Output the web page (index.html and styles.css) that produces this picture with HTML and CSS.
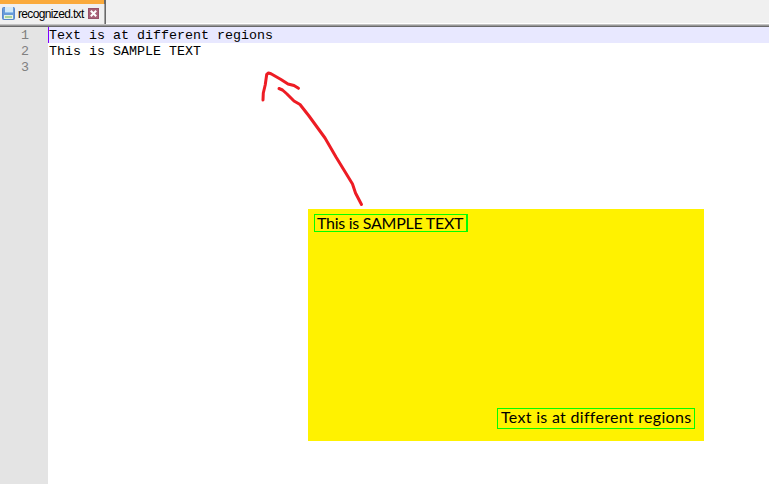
FILE: index.html
```html
<!DOCTYPE html>
<html lang="en">
<head>
<meta charset="utf-8">
<title>recognized.txt</title>
<link rel="stylesheet" href="styles.css">
</head>
<body>
<div class="window">
  <header class="tabs">
    <div class="tab">
      <svg class="save" width="13" height="13" viewBox="0 0 13 13">
        <rect x=".5" y=".5" width="12" height="12" rx="1" fill="#699bd9" stroke="#5788cb"/>
        <rect x="3" y="0" width="8" height="6" fill="#d3e9f8"/>
        <rect x="3" y="5" width="8" height="1" fill="#8fc1ec"/>
        <rect x="2" y="8" width="9" height="4" fill="#e8f2e2"/>
        <rect x="3" y="9" width="7" height="2" fill="#a9d59b"/>
      </svg>
      <span class="name">recognized.txt</span>
      <svg class="close" width="11" height="11" viewBox="0 0 11 11">
        <rect x=".5" y=".5" width="10" height="10" fill="#a76076" stroke="#985069"/>
        <path d="M2.8 2.8 8.2 8.2M8.2 2.8 2.8 8.2" stroke="#fff" stroke-width="2"/>
      </svg>
    </div>
  </header>
  <main class="editor">
    <div class="gutter"><div>1</div><div>2</div><div>3</div></div>
    <div class="code">
      <div class="line current"><span>Text is at different regions</span></div>
      <div class="line"><span>This is SAMPLE TEXT</span></div>
      <div class="line"></div>
    </div>
  </main>
  <svg class="arrow" width="130" height="160" viewBox="250 60 130 160">
    <path d="M263 100 263.3 93 265.2 85 266.7 74.5 268.5 73 271 73.7 281 79.5 288 84 294 85.5 298.5 88.3M279 88.5 282.5 90 287 94 294 101 300 104.5 309 116 325 138 336 157 352.5 184 355.5 193 361.5 204.5"/>
  </svg>
  <section class="sample">
    <div class="region first">This is SAMPLE TEXT</div>
    <div class="region second">Text is at different regions</div>
  </section>
</div>
</body>
</html>
```
FILE: styles.css
```css
* { box-sizing: border-box; }
body { margin: 0; background: #fff; overflow: hidden; }
.window { position: relative; width: 769px; height: 484px; display: flex; flex-direction: column; }
.tabs {
  height: 27px;
  flex: none;
  background: linear-gradient(#f0f0f0 0 23px, #fff 23px 24px, #c3c3c3 24px 25px, #989898 25px 26px, #696969 26px);
}
.tab {
  width: 106px;
  height: 24px;
  display: flex;
  align-items: flex-start;
  padding: 3px 0 0 2px;
  background: #f0f0f0;
  border-top: 4px solid #faaa3c;
  border-image: linear-gradient(90deg, #faaa3c 104px, #696969 104px) 4 0 0 0;
  box-shadow: inset -1px 0 #696969, inset -2px 0 #a0a0a0;
}
.save { flex: none; }
.name {
  width: 67px;
  margin-left: 3px;
  font: 12px/14px "Liberation Sans", sans-serif;
  letter-spacing: -.65px;
  white-space: nowrap;
  color: #000;
}
.close { margin: 1px 0 0 3px; flex: none; }
.editor { flex: 1; display: flex; font: 13.333px/16px "Liberation Mono", monospace; }
.gutter { width: 48px; background: #e4e4e4; color: #808080; padding: 1px 19px 0 0; text-align: right; }
.code { flex: 1; color: #000; }
.line { height: 16px; padding: 1px 0 0 1px; white-space: pre; }
.current { background: #e8e8ff; box-shadow: inset 1px 0 #8000ff; }
.arrow { position: absolute; left: 250px; top: 60px; }
.arrow path { fill: none; stroke: #ed1c24; stroke-width: 3; stroke-linecap: round; stroke-linejoin: round; }
.sample {
  position: absolute;
  left: 308px;
  top: 209px;
  width: 396px;
  height: 232px;
  padding: 5px 9px 12px 6px;
  display: flex;
  flex-direction: column;
  justify-content: space-between;
  background: #fff200;
  font: 16px/16px Lato, sans-serif;
  color: #000;
}
.region { border: 1px solid #00ff00; white-space: nowrap; }
.first { width: 154px; height: 18px; border-right-width: 2px; padding-left: 2px; line-height: 15px; letter-spacing: -.27px; }
.second { width: 198px; height: 21px; align-self: flex-end; padding-left: 3px; letter-spacing: .3px; }
```
